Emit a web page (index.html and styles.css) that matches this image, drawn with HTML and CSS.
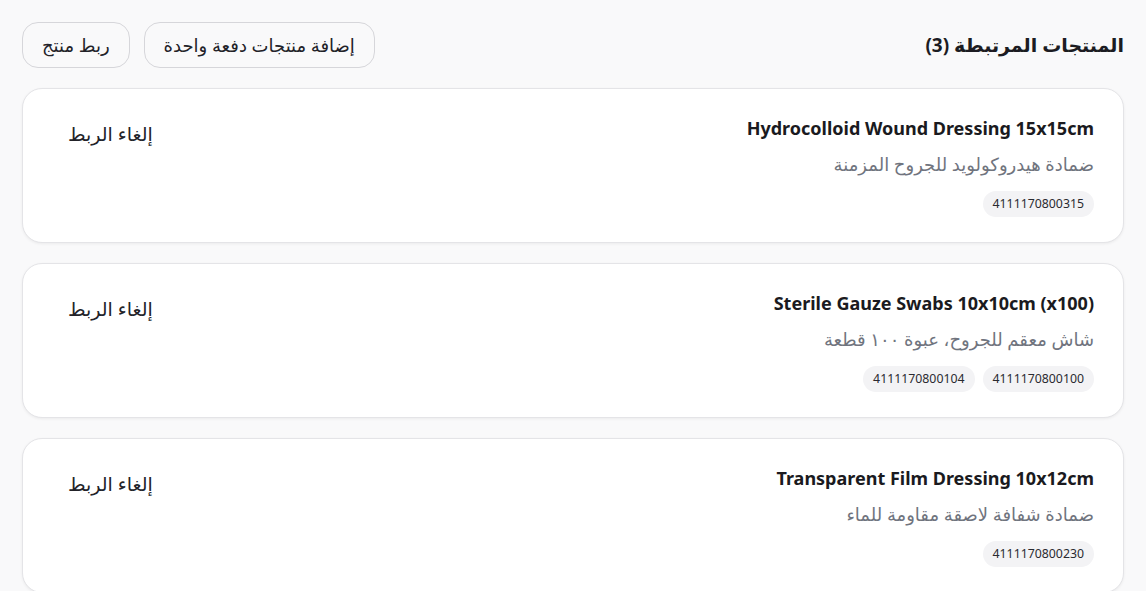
FILE: index.html
```html
<!DOCTYPE html>
<html lang="ar" dir="rtl">
<head>
<meta charset="utf-8">
<title>المنتجات المرتبطة</title>
<link rel="stylesheet" href="styles.css">
</head>
<body>
<main class="page">
  <header class="header">
    <h1 class="title">المنتجات المرتبطة (3)</h1>
    <div class="actions">
      <button class="btn">إضافة منتجات دفعة واحدة</button>
      <button class="btn">ربط منتج</button>
    </div>
  </header>

  <section class="list">
    <article class="card">
      <div class="info">
        <h2 class="name">Hydrocolloid Wound Dressing 15x15cm</h2>
        <p class="desc">ضمادة هيدروكولويد للجروح المزمنة</p>
        <div class="chips"><span class="chip">4111170800315</span></div>
      </div>
      <button class="unlink">إلغاء الربط</button>
    </article>

    <article class="card">
      <div class="info">
        <h2 class="name">Sterile Gauze Swabs 10x10cm (x100)</h2>
        <p class="desc">شاش معقم للجروح، عبوة ١٠٠ قطعة</p>
        <div class="chips"><span class="chip">4111170800100</span><span class="chip">4111170800104</span></div>
      </div>
      <button class="unlink">إلغاء الربط</button>
    </article>

    <article class="card">
      <div class="info">
        <h2 class="name">Transparent Film Dressing 10x12cm</h2>
        <p class="desc">ضمادة شفافة لاصقة مقاومة للماء</p>
        <div class="chips"><span class="chip">4111170800230</span></div>
      </div>
      <button class="unlink">إلغاء الربط</button>
    </article>
  </section>
</main>
</body>
</html>
```

FILE: styles.css
```css
* { box-sizing: border-box; }
html, body { margin: 0; padding: 0; }
body {
  background: #f9f9fa;
  font-family: "Noto Sans", "DejaVu Sans", sans-serif;
  color: #1c1c22;
}
.page {
  padding: 22px;
}
.header {
  display: flex;
  align-items: center;
  justify-content: space-between;
  margin-bottom: 20px;
}
.title {
  margin: 0;
  font-size: 19px;
  font-weight: 700;
  color: #1c1c22;
}
.actions {
  display: flex;
  gap: 14px;
}
.btn {
  font-family: inherit;
  height: 46px;
  padding: 0 19px;
  border: 1px solid #d6d6da;
  border-radius: 16px;
  background: #f9f9fa;
  color: #222228;
  font-size: 18px;
  font-weight: 500;
}
.list {
  display: flex;
  flex-direction: column;
  gap: 20px;
}
.card {
  display: flex;
  justify-content: space-between;
  align-items: flex-start;
  background: #fff;
  border: 1px solid #e4e4e7;
  border-radius: 20px;
  box-shadow: 0 1px 3px rgba(0,0,0,0.06);
  padding: 25px 29px 25px;
}
.info {
  display: flex;
  flex-direction: column;
  align-items: flex-start;
}
.name {
  margin: 0;
  font-size: 18px;
  line-height: 28px;
  font-weight: 700;
  color: #1a1a20;
  direction: ltr;
}
.desc {
  margin: 10px 0 0;
  font-size: 18px;
  line-height: 24px;
  color: #70747e;
}
.chips {
  display: flex;
  gap: 8px;
  margin-top: 15px;
}
.chip {
  background: #f3f3f5;
  border-radius: 13px;
  height: 26px;
  line-height: 26px;
  padding: 0 10px;
  font-size: 12.3px;
  color: #2a2a30;
}
.unlink {
  font-family: inherit;
  background: none;
  border: 0;
  padding: 7px 16px 9px;
  font-size: 19px;
  line-height: 26px;
  color: #222228;
}
```
